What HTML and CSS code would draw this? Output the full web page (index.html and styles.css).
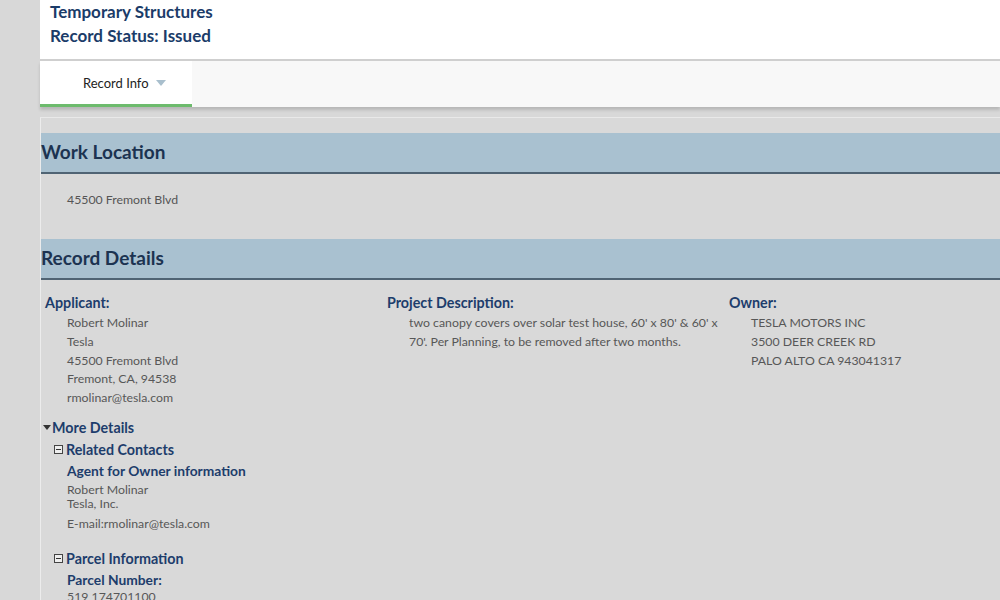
FILE: index.html
```html
<!DOCTYPE html>
<html lang="en">
<head>
    <meta charset="UTF-8">
    <meta name="viewport" content="width=device-width, initial-scale=1.0">
    <title>Record Info</title>
    <link rel="stylesheet" href="styles.css">
</head>
<body>
    <div class="pagina">
        <div class="cabecera">
            <div class="titulo">Temporary Structures</div>
            <div class="titulo">Record Status: Issued</div>
        </div>

        <div class="pestanas">
            <div class="pestana activa">Record Info <span class="flechita"></span></div>
        </div>

        <div class="panel">
            <h2 class="seccion">Work Location</h2>
            <div class="direccion">45500 Fremont Blvd</div>

            <h2 class="seccion">Record Details</h2>
            <div class="columnas">
                <div class="columna">
                    <div class="etiqueta">Applicant:</div>
                    <div class="valores">
                        <div>Robert Molinar</div>
                        <div>Tesla</div>
                        <div>45500 Fremont Blvd</div>
                        <div>Fremont, CA, 94538</div>
                        <div>rmolinar@tesla.com</div>
                    </div>
                </div>
                <div class="columna">
                    <div class="etiqueta">Project Description:</div>
                    <div class="valores">
                        <div>two canopy covers over solar test house, 60' x 80' &amp; 60' x 70'. Per Planning, to be removed after two months.</div>
                    </div>
                </div>
                <div class="columna">
                    <div class="etiqueta">Owner:</div>
                    <div class="valores">
                        <div>TESLA MOTORS INC</div>
                        <div>3500 DEER CREEK RD</div>
                        <div>PALO ALTO CA 943041317</div>
                    </div>
                </div>
            </div>

            <div class="mas-detalles"><span class="triangulo"></span>More Details</div>

            <div class="bloque">
                <div class="subtitulo"><span class="caja-menos"></span>Related Contacts</div>
                <div class="contacto">
                    <div class="etiqueta">Agent for Owner information</div>
                    <div class="apretado">
                        <div>Robert Molinar</div>
                        <div>Tesla, Inc.</div>
                    </div>
                    <div class="correo">E-mail:rmolinar@tesla.com</div>
                </div>
            </div>

            <div class="bloque">
                <div class="subtitulo"><span class="caja-menos"></span>Parcel Information</div>
                <div class="contacto">
                    <div class="etiqueta">Parcel Number:</div>
                    <div class="parcela">519 174701100</div>
                </div>
            </div>
        </div>
    </div>
</body>
</html>
```

FILE: styles.css
```css
body {
    margin: 0;
    font-family: Lato, "Open Sans", sans-serif;
    background-color: #d8d8d8;
    overflow: hidden;
}
.pagina {
    margin-left: 40px;
}
.cabecera {
    background: white;
    height: 59px;
    padding-left: 10px;
    border-bottom: 2px solid #cfcfcf;
}
.titulo {
    font-size: 17px;
    font-weight: bold;
    line-height: 24px;
    color: #1b3c69;
}
.pestanas {
    background: #f8f8f8;
    height: 46px;
    display: flex;
    box-shadow: 0px 3px 3px rgba(0, 0, 0, 0.15);
}
.pestana {
    width: 152px;
    box-sizing: border-box;
    padding-left: 43px;
    padding-top: 14px;
    font-size: 13px;
    color: #222;
}
.pestana.activa {
    background: white;
    height: 46px;
    border-bottom: 3px solid #6dbb6d;
}
.flechita {
    display: inline-block;
    width: 0;
    height: 0;
    margin-left: 4px;
    border-left: 5px solid transparent;
    border-right: 5px solid transparent;
    border-top: 6px solid #a9bfcd;
    vertical-align: 2px;
}
.panel {
    margin-top: 10px;
    border-top: 1px solid #e9e9e9;
    border-left: 1px solid #ececec;
    padding-top: 15px;
    background: #d9d9d9;
    height: 600px;
}
.seccion {
    margin: 0;
    height: 39px;
    line-height: 38px;
    background: #a9c1d0;
    border-bottom: 2px solid #506474;
    font-size: 19px;
    font-weight: bold;
    color: #1c3351;
}
.direccion {
    font-size: 12.3px;
    color: #555;
    padding: 18px 0 0 26px;
    height: 47px;
}
.columnas {
    display: grid;
    grid-template-columns: 342px 342px 1fr;
    padding-top: 14px;
}
.columna {
    padding-left: 4px;
}
.etiqueta {
    font-size: 14.3px;
    font-weight: bold;
    color: #1d3d6c;
    line-height: 18px;
}
.valores {
    padding-left: 22px;
    font-size: 12.3px;
    line-height: 18.75px;
    color: #575757;
    padding-top: 2px;
}
.mas-detalles {
    margin-top: 11px;
    padding-left: 2px;
    font-size: 14.3px;
    font-weight: bold;
    color: #1d3d6c;
    line-height: 18px;
}
.triangulo {
    display: inline-block;
    width: 0;
    height: 0;
    border-left: 4px solid transparent;
    border-right: 4px solid transparent;
    border-top: 5px solid #333;
    vertical-align: 3px;
    margin-right: 1px;
}
.bloque {
    padding-left: 13px;
    margin-top: 4px;
}
.subtitulo {
    font-size: 14.3px;
    font-weight: bold;
    color: #1d3d6c;
    line-height: 18px;
}
.caja-menos {
    display: inline-block;
    position: relative;
    width: 7px;
    height: 7px;
    border: 1px solid #444;
    background: #eee;
    margin-right: 3px;
    vertical-align: 1px;
}
.caja-menos::after {
    content: "";
    position: absolute;
    left: 1px;
    right: 1px;
    top: 3px;
    height: 1px;
    background: #333;
}
.contacto {
    padding-left: 13px;
    padding-top: 3px;
}
.contacto .etiqueta {
    font-size: 13.8px;
}
.apretado {
    font-size: 12.3px;
    line-height: 14px;
    color: #575757;
    padding-top: 3px;
}
.correo {
    font-size: 12.3px;
    color: #575757;
    padding-top: 5px;
    padding-bottom: 15px;
}
.parcela {
    font-size: 12.3px;
    line-height: 14px;
    color: #575757;
    padding-top: 1px;
}
```
